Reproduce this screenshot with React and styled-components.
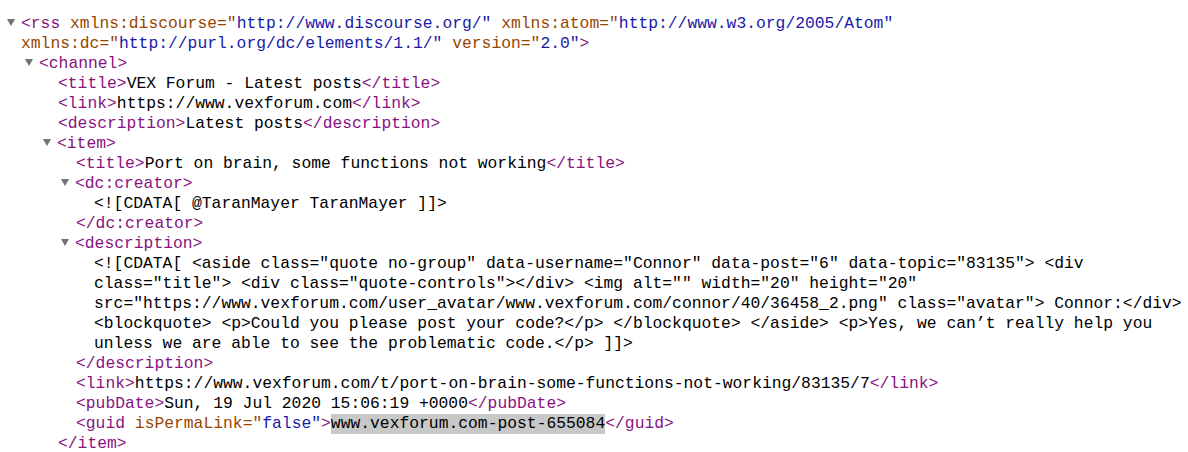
import styled, { createGlobalStyle } from 'styled-components';

const GlobalStyle = createGlobalStyle`
  html, body {
    margin: 0;
    background: #fff;
    overflow: hidden;
  }
`;

const Viewer = styled.div`
  padding: 14px 0 0 22px;
  font-family: "Liberation Mono", "DejaVu Sans Mono", monospace;
  font-size: 16.33px;
  line-height: 20px;
  color: #000;
`;

const Line = styled.div`
  display: flex;
`;

// gray fold arrow in the gutter left of an open tag
const Toggle = styled.span`
  flex: none;
  width: 0;
  height: 0;
  margin: 5px 6px 0 -15px;
  border-left: 4.5px solid transparent;
  border-right: 4.5px solid transparent;
  border-top: 7px solid #727272;
`;

const Content = styled.div`
  flex: 1;
  min-width: 0;
`;

const Children = styled.div`
  margin-left: 18px;
`;

const Tag = styled.span`
  color: #881280;
`;

const AttrName = styled.span`
  color: #994500;
`;

const AttrValue = styled.span`
  color: #1a1aa6;
`;

const Selected = styled.span`
  display: inline-block;
  background: #c8c8c8;
`;

const attrList = (attrs = []) =>
  attrs.map(([name, value]) => (
    <span key={name}>
      {" "}
      <AttrName>{name}="</AttrName>
      <AttrValue>{value}"</AttrValue>
    </span>
  ));

const Open = ({ name, attrs }) => (
  <Tag>
    &lt;{name}
    {attrList(attrs)}
    &gt;
  </Tag>
);

const Close = ({ name }) => <Tag>&lt;/{name}&gt;</Tag>;

function Leaf({ name, attrs, children }) {
  return (
    <Line>
      <Content>
        <Open name={name} attrs={attrs} />
        {children}
        <Close name={name} />
      </Content>
    </Line>
  );
}

// cut: the closing tag lies below the visible part of the page
function Folder({ name, attrs, cut, children }) {
  return (
    <div>
      <Line>
        <Toggle />
        <Content>
          <Open name={name} attrs={attrs} />
        </Content>
      </Line>
      <Children>{children}</Children>
      {!cut && (
        <Line>
          <Content>
            <Close name={name} />
          </Content>
        </Line>
      )}
    </div>
  );
}

const Text = ({ children }) => (
  <Line>
    <Content>{children}</Content>
  </Line>
);

const descriptionCdata =
  '<![CDATA[ <aside class="quote no-group" data-username="Connor" data-post="6" data-topic="83135"> <div class="title"> <div class="quote-controls"></div> <img alt="" width="20" height="20" src="https://www.vexforum.com/user_avatar/www.vexforum.com/connor/40/36458_2.png" class="avatar"> Connor:</div> <blockquote> <p>Could you please post your code?</p> </blockquote> </aside> <p>Yes, we can\u2019t really help you unless we are able to see the problematic code.</p> ]]>';

export default function App() {
  return (
    <>
      <GlobalStyle />
      <Viewer>
        <Folder
          cut
          name="rss"
          attrs={[
            ["xmlns:discourse", "http://www.discourse.org/"],
            ["xmlns:atom", "http://www.w3.org/2005/Atom"],
            ["xmlns:dc", "http://purl.org/dc/elements/1.1/"],
            ["version", "2.0"],
          ]}
        >
          <Folder cut name="channel">
            <Leaf name="title">VEX Forum - Latest posts</Leaf>
            <Leaf name="link">https://www.vexforum.com</Leaf>
            <Leaf name="description">Latest posts</Leaf>
            <Folder name="item">
              <Leaf name="title">Port on brain, some functions not working</Leaf>
              <Folder name="dc:creator">
                <Text>{"<![CDATA[ @TaranMayer TaranMayer ]]>"}</Text>
              </Folder>
              <Folder name="description">
                <Text>{descriptionCdata}</Text>
              </Folder>
              <Leaf name="link">
                https://www.vexforum.com/t/port-on-brain-some-functions-not-working/83135/7
              </Leaf>
              <Leaf name="pubDate">Sun, 19 Jul 2020 15:06:19 +0000</Leaf>
              <Leaf name="guid" attrs={[["isPermaLink", "false"]]}>
                <Selected>www.vexforum.com-post-655084</Selected>
              </Leaf>
            </Folder>
          </Folder>
        </Folder>
      </Viewer>
    </>
  );
}
